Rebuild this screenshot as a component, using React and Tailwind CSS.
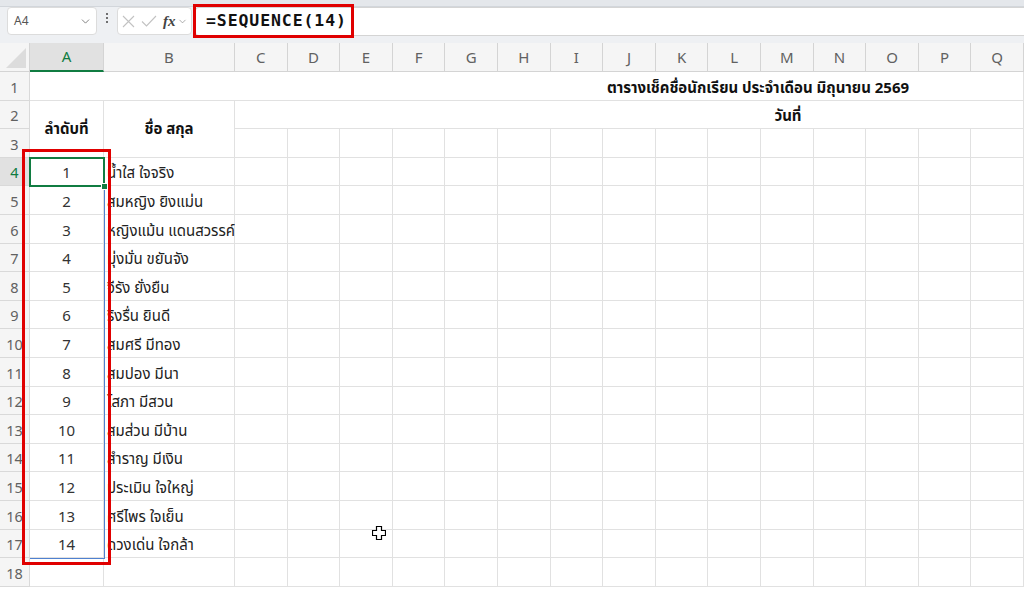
import { ChevronDown } from "lucide-react";

// ── Data ────────────────────────────────────────────────────────────────
const COLS = ["C", "D", "E", "F", "G", "H", "I", "J", "K", "L", "M", "N", "O", "P", "Q"];

const NAMES = [
  "น้ำใส ใจจริง",
  "สมหญิง ยิงแม่น",
  "หญิงแม้น แดนสวรรค์",
  "มุ่งมั่น ขยันจัง",
  "จีรัง ยั่งยืน",
  "ริงรื่น ยินดี",
  "สมศรี มีทอง",
  "สมปอง มีนา",
  "โสภา มีสวน",
  "สมส่วน มีบ้าน",
  "สำราญ มีเงิน",
  "ประเมิน ใจใหญ่",
  "ศรีไพร ใจเย็น",
  "ดวงเด่น ใจกล้า",
];

const FONT = "font-['Noto_Sans','Noto_Sans_Thai','Tahoma',sans-serif]";

// ── Helpers ─────────────────────────────────────────────────────────────
function RowHeader({ n, active }) {
  return (
    <div
      className={`flex items-end justify-center pb-[3px] border-r border-b border-[#d9d9d9] text-[14.5px] leading-5 ${
        active ? "bg-[#e1e1e1] text-[#107c41]" : "bg-[#f5f5f5] text-[#616161]"
      }`}
    >
      {n}
    </div>
  );
}

function Cell({ children, className = "" }) {
  return (
    <div className={`border-r border-b border-[#e1e1e1] bg-white ${className}`}>
      {children}
    </div>
  );
}

function EmptyCells() {
  return COLS.map((c) => <Cell key={c} />);
}

function FormulaBar() {
  return (
    <div className="relative h-[43px] bg-[#eef0f3] flex items-start">
      <div className="h-[7px] absolute inset-x-0 top-0 bg-[#e4e7eb] border-b border-[#d2d6db]" />
      <div className="relative mt-[7px] ml-[7px] w-[90px] h-[28px] bg-white border border-[#dcdcdc] rounded-[4px] flex items-center justify-between pl-[6px] pr-[4px]">
        <span className="text-[12px] text-[#555]">A4</span>
        <ChevronDown size={13} strokeWidth={1.5} className="text-[#666]" />
      </div>
      <div className="relative mt-[13px] w-[20px] flex flex-col items-center gap-[2px]">
        <span className="w-[2px] h-[2px] bg-[#444] rounded-full" />
        <span className="w-[2px] h-[2px] bg-[#444] rounded-full" />
        <span className="w-[2px] h-[2px] bg-[#444] rounded-full" />
      </div>
      <div className="relative mt-[7px] w-[75px] h-[28px] bg-white border border-[#dcdcdc] rounded-[4px] flex items-center pl-[4px] gap-[6px]">
        <svg width="13" height="13" viewBox="0 0 13 13" className="text-[#c2c2c2]">
          <path d="M1 1L12 12M12 1L1 12" stroke="currentColor" strokeWidth="1.1" fill="none" />
        </svg>
        <svg width="16" height="12" viewBox="0 0 16 12" className="text-[#c2c2c2]">
          <path d="M1 6.5L5.5 11L15 1" stroke="currentColor" strokeWidth="1.1" fill="none" />
        </svg>
        <span className="font-['Liberation_Serif',serif] italic font-bold text-[15px] text-[#444] leading-none">
          fx
        </span>
        <ChevronDown size={11} strokeWidth={1.5} className="text-[#888] -ml-[5px]" />
      </div>
      <div className="relative mt-[7px] ml-[3px] flex-1 h-[29px] bg-white border-y border-l border-[#d4d4d4] rounded-l-[4px] flex items-center pl-[10px]">
        <span className="font-['DejaVu_Sans_Mono',monospace] font-semibold text-[16.5px] text-[#111] tracking-[0.9px]">
          =SEQUENCE(14)
        </span>
      </div>
      {/* annotation */}
      <div className="absolute left-[193px] top-[4px] w-[161px] h-[34px] border-[3px] border-[#e00000]" />
    </div>
  );
}

// ── Componente principal ───────────────────────────────────────────────
export default function App() {
  return (
    <div className={`w-[1024px] h-[589px] overflow-hidden bg-white relative ${FONT}`}>
      <FormulaBar />

      <div className="relative grid grid-cols-[30px_74px_131px_repeat(15,minmax(0,1fr))] grid-rows-[29px_repeat(18,28.6px)]">
        {/* Column headers */}
        <div className="bg-[#f5f5f5] border-r border-b border-[#d4d4d4] relative overflow-hidden">
          <div className="absolute right-[3px] bottom-[3px] w-0 h-0 border-l-[20px] border-l-transparent border-b-[20px] border-b-[#dcdcdc]" />
        </div>
        <div className="bg-[#e1e1e1] border-r border-[#d4d4d4] border-b-2 border-b-[#107c41] flex items-center justify-center text-[15px] text-[#107c41]">
          A
        </div>
        <div className="bg-[#f5f5f5] border-r border-b border-[#d4d4d4] flex items-center justify-center text-[15px] text-[#616161]">
          B
        </div>
        {COLS.map((c) => (
          <div
            key={c}
            className="bg-[#f5f5f5] border-r border-b border-[#d4d4d4] flex items-center justify-center text-[15px] text-[#616161]"
          >
            {c}
          </div>
        ))}

        {/* Row 1 */}
        <RowHeader n={1} />
        <Cell className="col-span-17 overflow-hidden">
          <div className="w-[1456px] h-full flex items-end justify-center pb-[3px] font-bold text-[15px] leading-5 text-[#111]">
            ตารางเช็คชื่อนักเรียน ประจำเดือน มิถุนายน 2569
          </div>
        </Cell>

        {/* Row 2-3 */}
        <RowHeader n={2} />
        <Cell className="row-span-2 flex items-center justify-center font-bold text-[15px] text-[#111]">
          ลำดับที่
        </Cell>
        <Cell className="row-span-2 flex items-center justify-center font-bold text-[15px] text-[#111]">
          ชื่อ สกุล
        </Cell>
        <Cell className="col-span-15 overflow-hidden">
          <div className="w-[1106px] h-full flex items-end justify-center pb-[3px] font-bold text-[15px] leading-5 text-[#111]">
            วันที่
          </div>
        </Cell>
        <RowHeader n={3} />
        <EmptyCells />

        {/* Data rows */}
        {NAMES.map((name, i) => (
          <div key={name} className="contents">
            <RowHeader n={i + 4} active={i === 0} />
            <Cell className="flex items-end justify-center pb-[3px] text-[15px] leading-5 text-[#333]">
              {i + 1}
            </Cell>
            <Cell className="flex items-end pl-[3px] pb-[3px] text-[15px] leading-5 text-[#222] whitespace-nowrap">
              {name}
            </Cell>
            <EmptyCells />
          </div>
        ))}

        {/* Row 18 */}
        <RowHeader n={18} />
        <Cell />
        <Cell />
        <EmptyCells />

        {/* spill range + active cell */}
        <div className="absolute left-[30px] top-[114.8px] w-[75px] h-[401px] border-r border-b border-[#4f81d0] pointer-events-none" />
        <div className="absolute left-[29px] top-[113.8px] w-[76px] h-[30.6px] border-2 border-[#107c41] pointer-events-none" />
        <div className="absolute left-[101px] top-[140px] w-[7px] h-[7px] bg-[#107c41] border border-white pointer-events-none" />

        {/* annotation */}
        <div className="absolute left-[22px] top-[106px] w-[89px] h-[416px] border-[3px] border-[#e00000] pointer-events-none" />

        {/* mouse cursor */}
        <svg
          className="absolute left-[372px] top-[483px] pointer-events-none"
          width="14"
          height="14"
          viewBox="0 0 14 14"
        >
          <path
            d="M4.5 0.5h5v4h4v5h-4v4h-5v-4h-4v-5h4z"
            fill="white"
            stroke="black"
            strokeWidth="1.2"
          />
        </svg>
      </div>
    </div>
  );
}
